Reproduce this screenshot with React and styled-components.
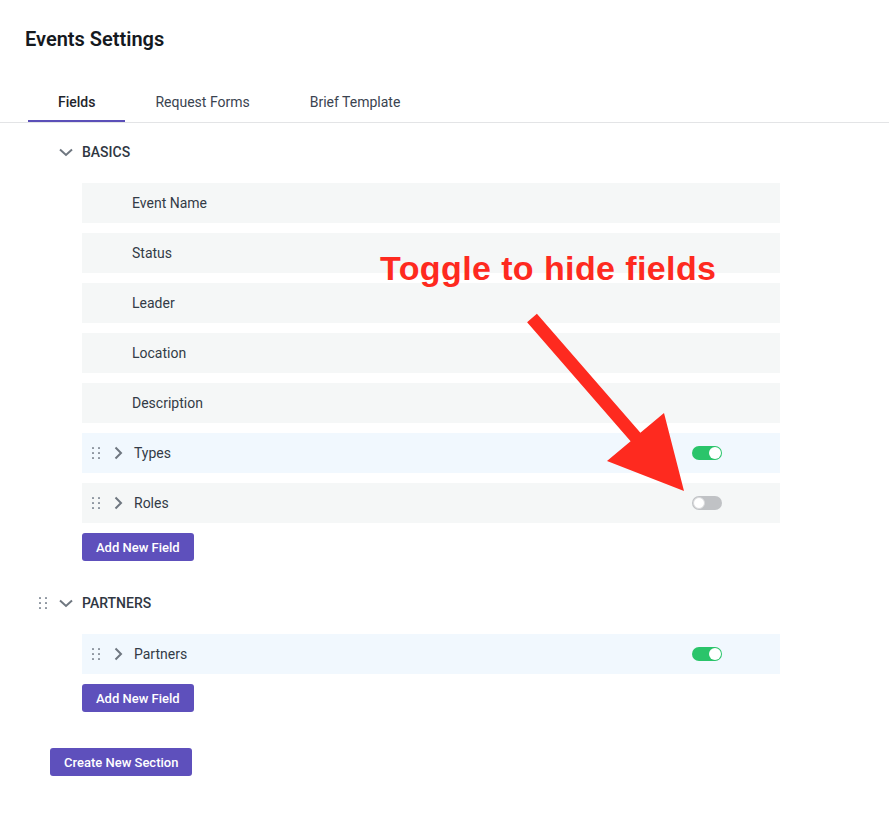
import React from "react";
import styled, { createGlobalStyle } from "styled-components";

const GlobalStyle = createGlobalStyle`
  body {
    margin: 0;
    background: #fff;
    font-family: Roboto, "Liberation Sans", Arial, sans-serif;
    color: #2f3742;
  }
`;

const sections = [
  {
    title: "BASICS",
    draggable: false,
    fields: [
      { name: "Event Name" },
      { name: "Status" },
      { name: "Leader" },
      { name: "Location" },
      { name: "Description" },
      { name: "Types", custom: true, on: true },
      { name: "Roles", custom: true, on: false },
    ],
  },
  {
    title: "PARTNERS",
    draggable: true,
    fields: [{ name: "Partners", custom: true, on: true }],
  },
];

const Grip = () => (
  <svg width="10" height="14" viewBox="0 0 10 14">
    {[2, 7, 12].map((y) =>
      [2, 8].map((x) => (
        <rect key={`${x}-${y}`} x={x - 1} y={y - 1} width="2" height="2" rx="0.6" fill="#8d96a0" />
      ))
    )}
  </svg>
);

const ChevronRight = () => (
  <svg width="10" height="14" viewBox="0 0 10 14">
    <path d="M2.5 1.5 L8 7 L2.5 12.5" fill="none" stroke="#6f7780" strokeWidth="2" />
  </svg>
);

const ChevronDown = () => (
  <svg width="14" height="9" viewBox="0 0 14 9">
    <path d="M1 1.5 L7 7 L13 1.5" fill="none" stroke="#6f7780" strokeWidth="2" />
  </svg>
);

const App = () => {
  return (
    <Page>
      <GlobalStyle />
      <Title>Events Settings</Title>
      <TabBar>
        <Tab $active>Fields</Tab>
        <Tab>Request Forms</Tab>
        <Tab>Brief Template</Tab>
      </TabBar>
      <Content>
        {sections.map((section) => (
          <Section key={section.title}>
            <SectionHeader>
              <GripSlot>{section.draggable && <Grip />}</GripSlot>
              <ChevronSlot>
                <ChevronDown />
              </ChevronSlot>
              <SectionTitle>{section.title}</SectionTitle>
            </SectionHeader>
            <FieldList>
              {section.fields.map((field) =>
                field.custom ? (
                  <FieldRow key={field.name} $highlight={field.on}>
                    <RowGrip>
                      <Grip />
                    </RowGrip>
                    <RowChevron>
                      <ChevronRight />
                    </RowChevron>
                    <CustomName>{field.name}</CustomName>
                    <Toggle $on={field.on}>
                      <Knob $on={field.on} />
                    </Toggle>
                  </FieldRow>
                ) : (
                  <FieldRow key={field.name}>
                    <FieldName>{field.name}</FieldName>
                  </FieldRow>
                )
              )}
              <Button>Add New Field</Button>
            </FieldList>
          </Section>
        ))}
        <CreateButton>Create New Section</CreateButton>
      </Content>

      <Annotation>Toggle to hide fields</Annotation>
      <Arrow width="200" height="200" viewBox="0 0 200 200">
        <polygon
          points="36.9,13.7 140.4,132.7 164,113 184,191 107,161 130.6,141.3 27.1,22.3"
          fill="#fe2a1f"
        />
      </Arrow>
    </Page>
  );
};

// Styled Components
const Page = styled.div`
  position: relative;
  width: 889px;
  min-height: 826px;
  padding-top: 28px;
  box-sizing: border-box;
`;

const Title = styled.h1`
  margin: 0;
  padding-left: 25px;
  font-size: 20px;
  line-height: 22px;
  font-weight: 600;
  color: #15191e;
`;

const TabBar = styled.div`
  display: flex;
  margin-top: 32px;
  padding-left: 28px;
  border-bottom: 1px solid #e3e4e6;
`;

const Tab = styled.div`
  padding: 2px 30px 0;
  height: 40px;
  box-sizing: border-box;
  display: flex;
  align-items: center;
  font-size: 14px;
  font-weight: ${(p) => (p.$active ? 500 : 400)};
  color: ${(p) => (p.$active ? "#1f252c" : "#3a4350")};
  border-bottom: 2px solid ${(p) => (p.$active ? "#5b4fb8" : "transparent")};
`;

const Content = styled.div`
  padding-top: 14px;
`;

const Section = styled.div`
  margin-bottom: 27px;
`;

const SectionHeader = styled.div`
  display: flex;
  align-items: center;
  height: 30px;
  padding-left: 37px;
`;

const GripSlot = styled.div`
  width: 12px;
  display: flex;
  justify-content: center;
`;

const ChevronSlot = styled.div`
  width: 14px;
  margin-left: 10px;
  display: flex;
  align-items: center;
`;

const SectionTitle = styled.div`
  margin-left: 9px;
  font-size: 14px;
  font-weight: 500;
  color: #2f3742;
`;

const FieldList = styled.div`
  display: flex;
  flex-direction: column;
  align-items: flex-start;
  gap: 10px;
  margin: 16px 0 0 82px;
`;

const FieldRow = styled.div`
  width: 698px;
  height: 40px;
  display: flex;
  align-items: center;
  padding-right: 58px;
  box-sizing: border-box;
  background: ${(p) => (p.$highlight ? "#f1f8fe" : "#f5f7f7")};
`;

const FieldName = styled.div`
  padding-left: 50px;
  font-size: 14px;
  color: #333b46;
`;

const RowGrip = styled.div`
  margin-left: 9px;
  width: 10px;
  display: flex;
`;

const RowChevron = styled.div`
  margin-left: 12px;
  width: 10px;
  display: flex;
`;

const CustomName = styled.div`
  margin-left: 11px;
  font-size: 14px;
  color: #333b46;
  flex: 1;
`;

const Toggle = styled.div`
  width: 30px;
  height: 14px;
  border-radius: 7px;
  background: ${(p) => (p.$on ? "#2ac46a" : "#c0c2c5")};
  display: flex;
  align-items: center;
  justify-content: ${(p) => (p.$on ? "flex-end" : "flex-start")};
  padding: 0 1px;
  box-sizing: border-box;
`;

const Knob = styled.div`
  width: 12px;
  height: 12px;
  border-radius: 50%;
  background: #fff;
  box-sizing: border-box;
  border: ${(p) => (p.$on ? "none" : "1px solid #d9dadc")};
`;

const Button = styled.button`
  height: 28px;
  padding: 0 14px;
  border: none;
  border-radius: 3px;
  background: #5e50bc;
  color: #fff;
  font-family: Roboto, "Liberation Sans", Arial, sans-serif;
  font-size: 13px;
  font-weight: 500;
  cursor: pointer;
`;

const CreateButton = styled(Button)`
  margin-left: 50px;
  margin-top: 9px;
`;

const Annotation = styled.div`
  position: absolute;
  left: 380px;
  top: 248px;
  font-family: "Liberation Sans", Arial, sans-serif;
  font-size: 34px;
  line-height: 40px;
  font-weight: 700;
  letter-spacing: 0.4px;
  color: #fe2a1f;
  white-space: nowrap;
`;

const Arrow = styled.svg`
  position: absolute;
  left: 500px;
  top: 300px;
  overflow: visible;
`;

export default App;
